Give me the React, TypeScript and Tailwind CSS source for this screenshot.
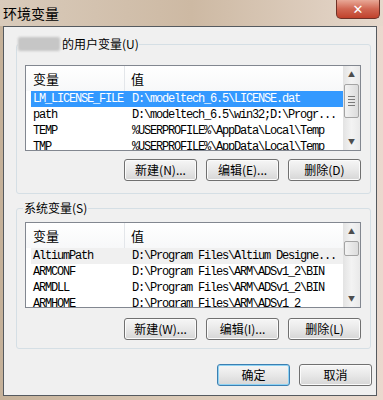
import React from 'react';

const cjk = '"Noto Sans CJK SC", "Noto Sans", sans-serif';
const mono = '"Liberation Mono", "Noto Sans CJK SC", monospace';

type Row = { name: string; value: string };

const userRows: Row[] = [
  { name: 'LM_LICENSE_FILE', value: 'D:\\modeltech_6.5\\LICENSE.dat' },
  { name: 'path', value: 'D:\\modeltech_6.5\\win32;D:\\Progr...' },
  { name: 'TEMP', value: '%USERPROFILE%\\AppData\\Local\\Temp' },
  { name: 'TMP', value: '%USERPROFILE%\\AppData\\Local\\Temp' },
];

const sysRows: Row[] = [
  { name: 'AltiumPath', value: 'D:\\Program Files\\Altium Designe...' },
  { name: 'ARMCONF', value: 'D:\\Program Files\\ARM\\ADSv1_2\\BIN' },
  { name: 'ARMDLL', value: 'D:\\Program Files\\ARM\\ADSv1_2\\BIN' },
  { name: 'ARMHOME', value: 'D:\\Program Files\\ARM\\ADSv1_2' },
];

const Btn = ({ label, primary = false }: { label: string; primary?: boolean }) => (
  <button
    className={`w-[73px] h-[22px] rounded-[3px] border text-[12px] leading-none text-black bg-gradient-to-b from-[#f6f6f6] via-[#e8e8e8] to-[#d6d6d6] ${primary ? 'border-[#3c7fb1] shadow-[inset_0_0_0_1px_#8fd3f4]' : 'border-[#707070] shadow-[inset_0_0_0_1px_#fbfbfb]'}`}
    style={{ fontFamily: cjk }}
  >
    {label}
  </button>
);

const Scrollbar = ({ thumbTop, thumbH, grip }: { thumbTop: number; thumbH: number; grip: boolean }) => (
  <div className="w-[17px] shrink-0 bg-gradient-to-r from-[#e3e3e3] via-[#f3f3f3] to-[#e9e9e9] flex flex-col items-center">
    <div className="h-[17px] flex items-center justify-center text-[7px] text-[#4d4d4d] leading-none">▲</div>
    <div
      className="w-[15px] rounded-[2px] border border-[#a4a4a4] bg-gradient-to-r from-[#f3f3f3] to-[#dcdcdc] flex flex-col items-center justify-center gap-[2px]"
      style={{ marginTop: thumbTop, height: thumbH }}
    >
      {grip && [0, 1, 2, 3].map(i => <div key={i} className="w-[7px] h-[1px] bg-[#7a7a7a]" />)}
    </div>
    <div className="flex-1" />
    <div className="h-[17px] flex items-center justify-center text-[7px] text-[#4d4d4d] leading-none">▼</div>
  </div>
);

const ListView = ({ rows, selected, thumbTop, thumbH, grip }: { rows: Row[]; selected: 'blue' | 'gray'; thumbTop: number; thumbH: number; grip: boolean }) => (
  <div className="ml-[8px] w-[336px] h-[86px] border border-[#828790] bg-white flex overflow-hidden">
    <div className="flex-1 min-w-0 flex flex-col">
      <div className="h-[25px] shrink-0 flex text-[13px] text-black bg-gradient-to-b from-white to-[#f7f8f9]" style={{ fontFamily: cjk }}>
        <div className="w-[99px] pl-[7px] flex items-center border-r border-[#e3e6ea]">变量</div>
        <div className="pl-[6px] flex items-center">值</div>
      </div>
      {rows.map((r, i) => (
        <div
          key={r.name}
          className={`ml-[5px] h-[16px] shrink-0 flex items-center text-[12px] tracking-[-1.2px] whitespace-nowrap ${i === 0 ? (selected === 'blue' ? 'bg-[#3399ff] text-white' : 'bg-[#f0f0f0] text-black') : 'text-black'}`}
          style={{ fontFamily: mono }}
        >
          <div className="w-[94px] pl-[2px]">{r.name}</div>
          <div className="pl-[7px]">{r.value}</div>
        </div>
      ))}
    </div>
    <Scrollbar thumbTop={thumbTop} thumbH={thumbH} grip={grip} />
  </div>
);

export default function App() {
  return (
    <div className="w-[383px] h-[400px] overflow-hidden flex flex-col bg-gradient-to-r from-[#c5b199] via-[#dccbb8] to-[#ead9ce]">
      <div className="h-[26px] shrink-0 flex items-start justify-between bg-gradient-to-r from-[#d9cbbb] via-[#cdb9a3] to-[#e6d8cc]">
        <span className="ml-[3px] mt-[4px] text-[14px] leading-[18px] text-black" style={{ fontFamily: cjk }}>环境变量</span>
        <div className="mr-[3px] w-[44px] h-[19px] rounded-b-[5px] border border-t-0 border-[#6e3127] bg-gradient-to-b from-[#e8a897] via-[#d06652] to-[#c0412b] flex items-center justify-center text-white text-[13px] font-bold leading-none" style={{ fontFamily: '"DejaVu Sans", sans-serif' }}>
          ✕
        </div>
      </div>

      <div className="ml-[3px] mr-[6px] mb-[4px] flex-1 border border-[#555a5f] bg-[#f0f0f0] flex flex-col" style={{ fontFamily: cjk }}>
        <fieldset className="mt-[9px] ml-[12px] w-[355px] border border-[#d5dfe5] rounded-[3px] px-0 pb-[12px]">
          <legend className="ml-[1px] flex items-center h-[16px] text-[12px] text-black">
            <span className="w-[42px] h-[14px] bg-[#c6c6c6] blur-[1px] rounded-[2px]" />
            <span className="ml-[2px]">的用户变量(U)</span>
          </legend>
          <div className="mt-[13px]">
            <ListView rows={userRows} selected="blue" thumbTop={1} thumbH={34} grip />
          </div>
          <div className="mt-[8px] mr-[9px] flex justify-end gap-[9px]">
            <Btn label="新建(N)..." />
            <Btn label="编辑(E)..." />
            <Btn label="删除(D)" />
          </div>
        </fieldset>

        <fieldset className="mt-[6px] ml-[12px] w-[355px] border border-[#d5dfe5] rounded-[3px] px-0 pb-[8px]">
          <legend className="ml-[6px] px-[1px] h-[16px] text-[12px] leading-[16px] text-black">系统变量(S)</legend>
          <div className="mt-[6px]">
            <ListView rows={sysRows} selected="gray" thumbTop={1} thumbH={15} grip={false} />
          </div>
          <div className="mt-[10px] mr-[9px] flex justify-end gap-[9px]">
            <Btn label="新建(W)..." />
            <Btn label="编辑(I)..." />
            <Btn label="删除(L)" />
          </div>
        </fieldset>

        <div className="mt-[15px] mr-[4px] flex justify-end gap-[9px]">
          <Btn label="确定" primary />
          <Btn label="取消" />
        </div>
      </div>
    </div>
  );
}
